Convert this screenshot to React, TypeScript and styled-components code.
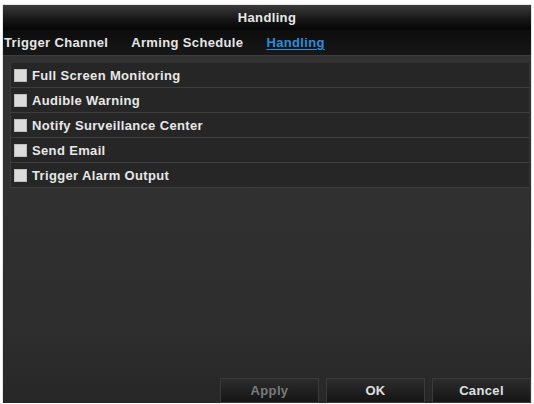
import React from "react";
import styled, { createGlobalStyle } from "styled-components";

const GlobalStyle = createGlobalStyle`
  html, body {
    margin: 0;
    padding: 0;
    background: #fff;
  }
  body {
    font-family: "Liberation Sans", Arial, sans-serif;
    letter-spacing: 0.35px;
  }
`;

const Window = styled.div`
  margin: 5px 3px 0 3px;
  width: 528px;
  height: 398px;
  display: flex;
  flex-direction: column;
  background: linear-gradient(to bottom, #333 0%, #2e2e2e 80%, #272727 100%);
  box-shadow: 0 0 1px rgba(0, 0, 0, 0.6);
`;

const TitleBar = styled.div`
  height: 25px;
  display: flex;
  align-items: center;
  justify-content: center;
  background: linear-gradient(to bottom, #3a3a3a 0%, #151515 60%, #050505 100%);
  color: #e8e8e8;
  font-size: 13px;
  font-weight: bold;
`;

const TabBar = styled.div`
  height: 25px;
  display: flex;
  align-items: center;
  gap: 23px;
  padding-left: 1px;
  background: linear-gradient(to bottom, #0c0c0c 0%, #181818 100%);
  border-bottom: 1px solid #3c3c3c;
`;

const Tab = styled.span<{ $active?: boolean }>`
  font-size: 13px;
  font-weight: bold;
  color: ${(p) => (p.$active ? "#2a8fd8" : "#e6e6e6")};
  text-decoration: ${(p) => (p.$active ? "underline" : "none")};
  text-underline-offset: 2px;
`;

const Body = styled.div`
  flex: 1;
  display: flex;
  flex-direction: column;
  padding: 7px 0 0 7px;
`;

const List = styled.div`
  display: flex;
  flex-direction: column;
  background: #262626;
  border-left: 1px solid #3a3a3a;
  margin-right: 2px;
`;

const Row = styled.label`
  height: 24px;
  display: flex;
  align-items: center;
  gap: 5px;
  padding-left: 3px;
  border-bottom: 1px solid #3e3e3e;
  color: #e8e8e8;
  font-size: 13px;
  font-weight: bold;
`;

const Box = styled.span`
  width: 13px;
  height: 13px;
  background: #dcdcdc;
  border: 1px solid #bdbdbd;
  box-sizing: border-box;
`;

const Footer = styled.div`
  margin-top: auto;
  display: flex;
  justify-content: flex-end;
  gap: 7px;
`;

const Button = styled.button<{ $disabled?: boolean }>`
  width: 99px;
  height: 25px;
  border: 1px solid #3a3a3a;
  background: linear-gradient(to bottom, #2c2c2c 0%, #151515 100%);
  color: ${(p) => (p.$disabled ? "#7a7a7a" : "#e0e0e0")};
  font-family: "Liberation Sans", Arial, sans-serif;
  letter-spacing: 0.35px;
  font-size: 13px;
  font-weight: bold;
  padding: 0;
`;

const items = [
  "Full Screen Monitoring",
  "Audible Warning",
  "Notify Surveillance Center",
  "Send Email",
  "Trigger Alarm Output",
];

const App: React.FC = () => {
  return (
    <>
      <GlobalStyle />
      <Window>
        <TitleBar>Handling</TitleBar>
        <TabBar>
          <Tab>Trigger Channel</Tab>
          <Tab>Arming Schedule</Tab>
          <Tab $active>Handling</Tab>
        </TabBar>
        <Body>
          <List>
            {items.map((item) => (
              <Row key={item}>
                <Box />
                {item}
              </Row>
            ))}
          </List>
          <Footer>
            <Button $disabled>Apply</Button>
            <Button>OK</Button>
            <Button>Cancel</Button>
          </Footer>
        </Body>
      </Window>
    </>
  );
};

export default App;
